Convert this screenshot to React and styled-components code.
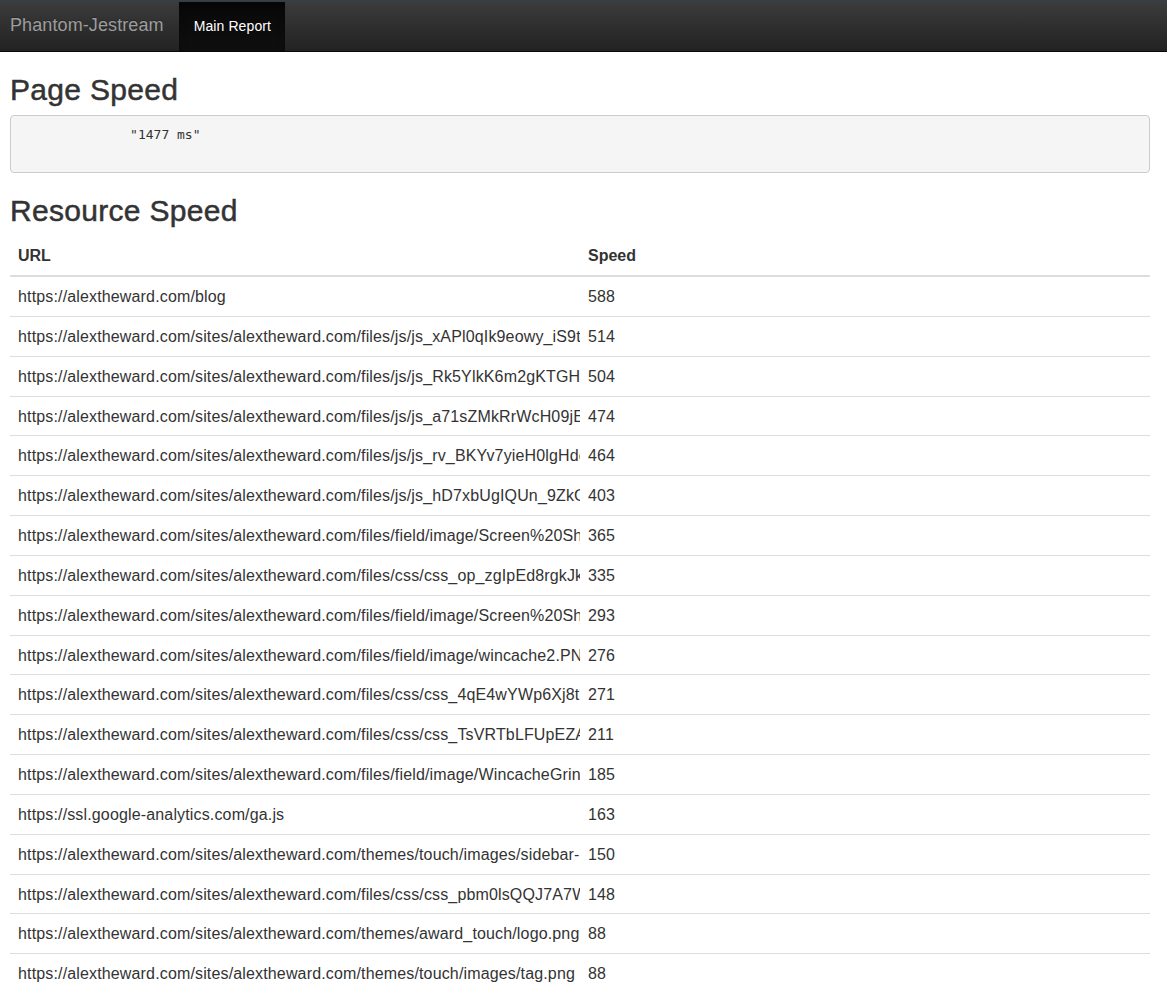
import React from "react";
import styled, { createGlobalStyle } from "styled-components";

const GlobalStyle = createGlobalStyle`
  html, body {
    margin: 0;
    padding: 0;
    background: #fff;
  }
  body {
    font-family: "Liberation Sans", Arial, sans-serif;
    font-size: 16px;
    line-height: 1.42857;
    color: #333;
  }
`

const Navbar = styled.nav`
  display: flex;
  align-items: stretch;
  height: 50px;
  border-top: 1px solid #34404d;
  border-bottom: 1px solid #080808;
  background: linear-gradient(to bottom, #3c3c3c 0%, #222 100%);
  margin-bottom: 20px;
`

const Brand = styled.a`
  display: flex;
  align-items: center;
  padding: 0 15px 0 10px;
  font-size: 18px;
  letter-spacing: 0.1px;
  color: #9d9d9d;
  text-decoration: none;
  text-shadow: 0 -1px 0 rgba(0, 0, 0, 0.25);
`

const NavLink = styled.a`
  display: flex;
  align-items: center;
  padding: 1px 14px 0 15px;
  margin-top: 1px;
  font-size: 14px;
  letter-spacing: 0.1px;
  text-decoration: none;
  color: ${props => (props.active ? "#fff" : "#9d9d9d")};
  background: ${props => (props.active ? "linear-gradient(to bottom, #080808 0%, #0f0f0f 100%)" : "transparent")};
  box-shadow: ${props => (props.active ? "inset 0 3px 9px rgba(0, 0, 0, 0.25)" : "none")};
`

const Content = styled.main`
  width: 1140px;
  padding: 0 10px;
`

const Heading = styled.h2`
  margin: 20px 0 9px;
  padding-top: 1px;
  font-size: 30px;
  font-weight: 500;
  line-height: 1.1;
  letter-spacing: 0.3px;
  color: #333;
  -webkit-text-stroke: 0.5px #333;
`

const Pre = styled.pre`
  margin: 0 0 11px;
  padding: 9.5px;
  font-family: "DejaVu Sans Mono", "Liberation Mono", monospace;
  font-size: 13px;
  line-height: 1.42857;
  color: #333;
  background: #f5f5f5;
  border: 1px solid #ccc;
  border-radius: 4px;
  white-space: pre;
`

const Table = styled.table`
  width: 100%;
  table-layout: fixed;
  border-collapse: collapse;
  border-spacing: 0;
`

const Th = styled.th`
  padding: 9px 8px 7px;
  text-align: left;
  font-weight: bold;
  vertical-align: bottom;
  border-bottom: 2px solid #ddd;
  white-space: nowrap;
  overflow: hidden;
`

const Td = styled.td`
  padding: 9px 8px 7px;
  vertical-align: top;
  letter-spacing: 0.15px;
  border-top: 1px solid #ddd;
  white-space: nowrap;
  overflow: hidden;
`

const Row = styled.tr`
  &:first-child td {
    border-top: 0;
  }
`

const base = "https://alextheward.com/sites/alextheward.com/";

const resources = [
  ["https://alextheward.com/blog", 588],
  [base + "files/js/js_xAPl0qIk9eowy_iS9tNHCTPbcWoVfLeXk0PdM2w.js", 514],
  [base + "files/js/js_Rk5YlkK6m2gKTGHmQxJfFpeWXhLr2zD8n0sVbI.js", 504],
  [base + "files/js/js_a71sZMkRrWcH09jEkR8Qf3mK1vY0uTcqzgLs2pI.js", 474],
  [base + "files/js/js_rv_BKYv7yieH0lgHdcPqZ3sMeFwYkAa8nUj41Rt.js", 464],
  [base + "files/js/js_hD7xbUgIQUn_9ZkGwTm3pHcR0aEsYvLq5oNd8Ko.js", 403],
  [base + "files/field/image/Screen%20Shot%202013-03-01%20at%209.41.12%20PM.png", 365],
  [base + "files/css/css_op_zgIpEd8rgkJkXsWbTqM4fHn2Ya0cRvLu9eP.css", 335],
  [base + "files/field/image/Screen%20Shot%202013-02-21%20at%208.12.40%20PM.png", 293],
  [base + "files/field/image/wincache2.PNG", 276],
  [base + "files/css/css_4qE4wYWp6Xj8tKm1ZsRcV0aHnLbQ5yFuDgPe3o.css", 271],
  [base + "files/css/css_TsVRTbLFUpEZAq0wXk3mJ7cYhGn9sRdPf2LuBe.css", 211],
  [base + "files/field/image/WincacheGrind.png", 185],
  ["https://ssl.google-analytics.com/ga.js", 163],
  [base + "themes/touch/images/sidebar-bg.png", 150],
  [base + "files/css/css_pbm0lsQQJ7A7Wc2kTnYf5HrX8qLsVa1eDuMz9g.css", 148],
  [base + "themes/award_touch/logo.png", 88],
  [base + "themes/touch/images/tag.png", 88],
];

export default function App() {
  return (
    <>
      <GlobalStyle />
      <Navbar>
        <Brand href="#">Phantom-Jestream</Brand>
        <NavLink href="#" active>Main Report</NavLink>
      </Navbar>
      <Content>
        <Heading>Page Speed</Heading>
        <Pre>{'              "1477 ms"\n        '}</Pre>
        <Heading>Resource Speed</Heading>
        <Table>
          <colgroup>
            <col style={{ width: "50%" }} />
            <col style={{ width: "50%" }} />
          </colgroup>
          <thead>
            <tr>
              <Th>URL</Th>
              <Th>Speed</Th>
            </tr>
          </thead>
          <tbody>
            {resources.map(([url, speed], i) => (
              <Row key={i}>
                <Td>{url}</Td>
                <Td>{speed}</Td>
              </Row>
            ))}
          </tbody>
        </Table>
      </Content>
    </>
  );
}
